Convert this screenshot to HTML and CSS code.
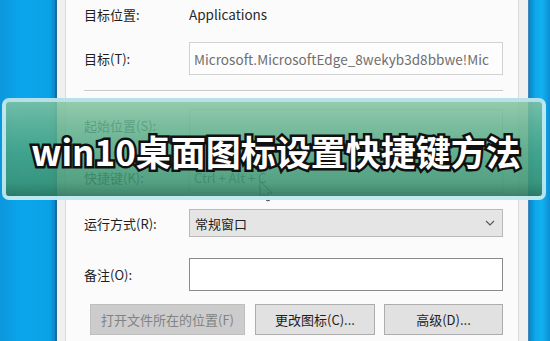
FILE: index.html
```html
<!DOCTYPE html>
<html lang="zh-CN">
<head>
<meta charset="utf-8">
<title>win10桌面图标设置快捷键方法</title>
<link rel="stylesheet" href="styles.css">
</head>
<body>
<div class="screen">
  <div class="desk desk-left"></div>
  <div class="window">
    <div class="page">
      <div class="row row-loc">
        <span class="label">目标位置:</span>
        <span class="value">Applications</span>
      </div>
      <div class="row row-target">
        <span class="label">目标(T):</span>
        <div class="field readonly">Microsoft.MicrosoftEdge_8wekyb3d8bbwe!Mic</div>
      </div>
      <div class="sep"></div>
      <div class="row row-start">
        <span class="label">起始位置(S):</span>
        <div class="field"></div>
      </div>
      <div class="row row-key">
        <span class="label">快捷键(K):</span>
        <div class="field">Ctrl + Alt + C</div>
      </div>
      <div class="row row-run">
        <span class="label">运行方式(R):</span>
        <div class="field select">
          <span>常规窗口</span>
          <svg class="chev" width="10" height="6" viewBox="0 0 10 6"><path d="M1 1 L5 5 L9 1" fill="none" stroke="#555" stroke-width="1.1"/></svg>
        </div>
      </div>
      <div class="row row-note">
        <span class="label">备注(O):</span>
        <div class="field note"></div>
      </div>
      <div class="buttons">
        <div class="btn disabled b1">打开文件所在的位置(F)</div>
        <div class="btn b2">更改图标(C)...</div>
        <div class="btn b3">高级(D)...</div>
      </div>
      <svg class="cursor" width="16" height="24" viewBox="0 0 16 24"><path d="M1 1 L1 18 L5 14 L8 21 L11 20 L8 13 L13 13 Z" fill="#fff" stroke="#444" stroke-width="1"/></svg>
    </div>
  </div>
  <div class="desk desk-right"></div>
  <div class="banner"><span class="title">win10桌面图标设置快捷键方法</span></div>
</div>
</body>
</html>
```
FILE: styles.css
```css
html, body {
  margin: 0;
  padding: 0;
}
body {
  width: 550px;
  height: 341px;
  overflow: hidden;
  font-family: "Noto Sans CJK SC", "Open Sans", sans-serif;
  font-size: 13px;
  color: #1e1e1e;
}
.screen {
  position: relative;
  display: flex;
  width: 550px;
  height: 341px;
}
.desk {
  height: 341px;
}
.desk-left {
  width: 55px;
  background: linear-gradient(90deg, #0c97dc 0%, #0aa6ec 40%, #0aa2e6 90%, #0b86c8 100%);
  border-right: 2px solid #1b6a9a;
}
.desk-right {
  width: 21px;
  background: linear-gradient(90deg, #0a82c8 0%, #0ea7ea 30%, #12b2f2 60%, #0b8fd4 100%);
  border-left: 1px solid #3d86b6;
}
.window {
  width: 471px;
  background: #f0f0f0;
  padding: 0 9px 0 8px;
  box-sizing: border-box;
  display: flex;
}
.page {
  position: relative;
  flex: 1;
  background: #fbfbfb;
  border-left: 1px solid #d9d9d9;
  border-right: 1px solid #d9d9d9;
  padding: 0 15px 0 18px;
  display: flex;
  flex-direction: column;
}
.row {
  display: flex;
  align-items: center;
}
.label {
  width: 105px;
  flex: none;
  white-space: nowrap;
}
.value {
  color: #2a2a2a;
  font-size: 13.5px;
}
.field {
  flex: 1;
  box-sizing: border-box;
  border: 1px solid #d2d2d2;
  background: #fdfdfd;
  display: flex;
  align-items: center;
  padding: 0 4px;
  height: 100%;
  white-space: nowrap;
  overflow: hidden;
  color: #222;
}
.readonly {
  color: #6e6e6e;
  font-size: 13.5px;
  letter-spacing: 0.05px;
}
.row-loc { height: 28px; }
.row-target { height: 33px; margin-top: 14px; }
.sep {
  height: 1px;
  margin-top: 15px;
  background: #c9c9c9;
  border-bottom: 1px solid #ffffff;
}
.row-start { height: 32px; margin-top: 17px; }
.row-key { height: 32px; margin-top: 20px; }
.row-key .field { color: #555; }
.row-run { height: 28px; margin-top: 16px; }
.select {
  background: #e5e5e5;
  border-color: #b9b9b9;
  justify-content: space-between;
  padding: 0 7px 0 5px;
}
.chev { flex: none; }
.row-note { height: 33px; margin-top: 21px; }
.note {
  border-color: #8a8a8a;
  background: #ffffff;
}
.buttons {
  display: flex;
  margin-top: 13px;
  margin-left: 6px;
  height: 31px;
  gap: 10px;
}
.btn {
  box-sizing: border-box;
  height: 31px;
  border: 1px solid #adadad;
  background: #e1e1e1;
  display: flex;
  align-items: center;
  justify-content: center;
  white-space: nowrap;
  color: #1e1e1e;
}
.b1 { width: 155px; }
.b2 { width: 120px; }
.b3 { width: 119px; margin-left: -1px; }
.disabled {
  background: #cccccc;
  border-color: #bfbfbf;
  color: #838383;
}
.cursor {
  position: absolute;
  left: 193px;
  top: 180px;
}
.banner {
  position: absolute;
  left: 2px;
  top: 98px;
  width: 544px;
  height: 102px;
  box-sizing: border-box;
  border: 4px solid rgba(200, 238, 252, 0.88);
  border-radius: 7px;
  background: linear-gradient(180deg,
    rgba(130, 194, 158, 0.86) 0%,
    rgba(100, 178, 142, 0.86) 25%,
    rgba(72, 162, 126, 0.86) 55%,
    rgba(62, 148, 114, 0.88) 85%,
    rgba(45, 120, 92, 0.92) 100%);
  display: flex;
  align-items: center;
  justify-content: center;
}
.title {
  font-family: "Noto Sans CJK SC", sans-serif;
  font-weight: 700;
  font-size: 35px;
  line-height: 1;
  color: #ffffff;
  -webkit-text-stroke: 5px #111;
  paint-order: stroke fill;
  white-space: nowrap;
  letter-spacing: 0px;
  margin-left: 4px;
  margin-top: 2px;
}
```
